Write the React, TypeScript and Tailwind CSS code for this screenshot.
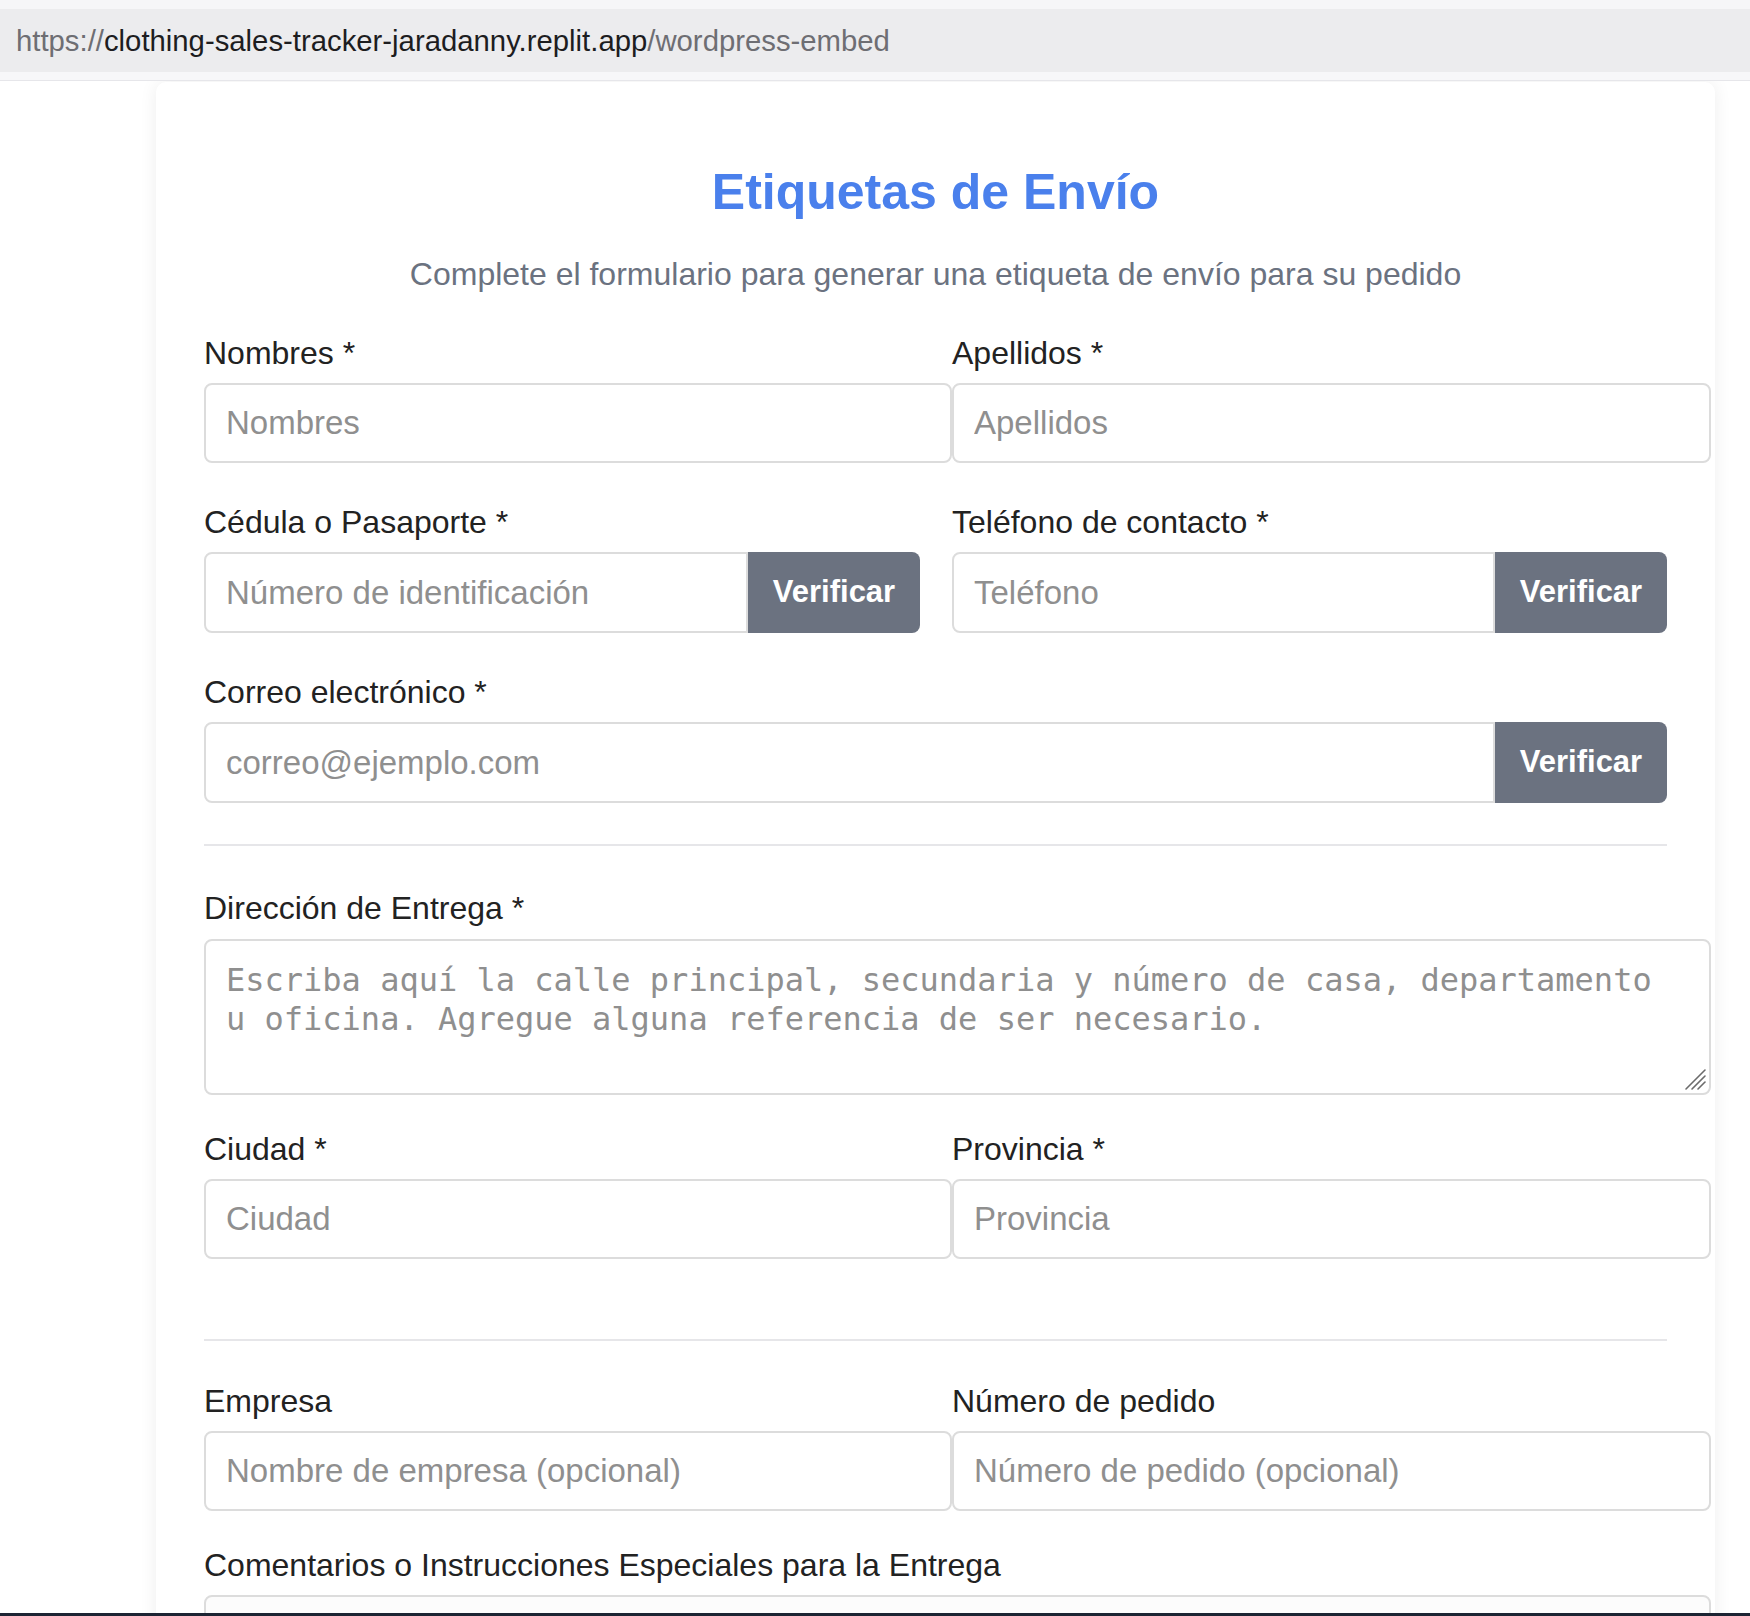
import type { ReactNode } from 'react';

const labelCls = 'block text-[32px] leading-[40px] text-[#222222]';
const inputCls =
  'border-2 border-[#dcdcdc] bg-white px-[20px] text-[33px] text-[#222222] outline-none placeholder:text-[#8f8f8f]';

function Label({ children, className = 'mb-[10px]' }: { children: ReactNode; className?: string }) {
  return <label className={`${labelCls} ${className}`}>{children}</label>;
}

function VerifyField({ placeholder, width }: { placeholder: string; width: string }) {
  return (
    <div className={`flex h-[81px] ${width}`}>
      <input className={`${inputCls} min-w-0 flex-1 rounded-l-[8px]`} placeholder={placeholder} />
      <button className="w-[172px] shrink-0 rounded-r-[8px] bg-[#6b7280] text-[31px] font-bold text-white">
        Verificar
      </button>
    </div>
  );
}

function ResizeGrip() {
  return (
    <svg className="pointer-events-none absolute bottom-[4px] right-[4px]" width="24" height="24" viewBox="0 0 24 24">
      <g stroke="#6b6b6b" strokeWidth="1.6" strokeLinecap="round">
        <line x1="3" y1="22" x2="22" y2="3" />
        <line x1="9" y1="22" x2="22" y2="9" />
        <line x1="15" y1="22" x2="22" y2="15" />
      </g>
    </svg>
  );
}

export default function App() {
  return (
    <div className="flex h-[1616px] flex-col overflow-hidden bg-white font-['Liberation_Sans',Arial,sans-serif]">
      <div className="h-[9px] bg-[#f6f6f8]" />
      <div className="flex h-[63px] items-center bg-[#ececee] pl-[16px] text-[29.3px] text-[#6e6e73]">
        https://<span className="text-[#1d1d1f]">clothing-sales-tracker-jaradanny.replit.app</span>/wordpress-embed
      </div>
      <div className="h-[9px] border-b border-[#e6e6ea] bg-[#f7f7f9]" />

      <main className="flex-1 overflow-hidden pl-[156px] pt-[1px]">
        <div className="w-[1559px] rounded-t-[10px] bg-white px-[48px] pt-[80px] shadow-[0_0_18px_rgba(0,0,0,0.07)]">
          <h1 className="text-center text-[50px] font-bold leading-[60px] text-[#4a80ec]">Etiquetas de Envío</h1>
          <p className="mt-[32px] text-center text-[32px] leading-[40px] text-[#6b7280]">
            Complete el formulario para generar una etiqueta de envío para su pedido
          </p>

          <div className="mt-[39px] grid grid-cols-[716px_715px] gap-x-[32px]">
            <div>
              <Label>Nombres *</Label>
              <input className={`${inputCls} h-[80px] w-[748px] rounded-[8px]`} placeholder="Nombres" />
            </div>
            <div>
              <Label>Apellidos *</Label>
              <input className={`${inputCls} h-[80px] w-[759px] rounded-[8px]`} placeholder="Apellidos" />
            </div>
          </div>

          <div className="mt-[39px] grid grid-cols-[716px_715px] gap-x-[32px]">
            <div>
              <Label>Cédula o Pasaporte *</Label>
              <VerifyField placeholder="Número de identificación" width="w-[716px]" />
            </div>
            <div>
              <Label>Teléfono de contacto *</Label>
              <VerifyField placeholder="Teléfono" width="w-[715px]" />
            </div>
          </div>

          <div className="mt-[39px]">
            <Label>Correo electrónico *</Label>
            <VerifyField placeholder="correo@ejemplo.com" width="w-full" />
          </div>

          <hr className="mt-[41px] h-[2px] border-0 bg-[#e6e6e9]" />

          <div className="mt-[42px]">
            <Label className="mb-[11px]">Dirección de Entrega *</Label>
            <div className="relative w-[1507px]">
              <textarea
                className="block h-[156px] w-full resize-none rounded-[8px] border-2 border-[#dcdcdc] bg-white pl-[20px] pr-[30px] pt-[20px] font-['DejaVu_Sans_Mono',Menlo,monospace] text-[32px] leading-[39px] outline-none placeholder:text-[#8f8f8f]"
                placeholder="Escriba aquí la calle principal, secundaria y número de casa, departamento u oficina. Agregue alguna referencia de ser necesario."
              />
              <ResizeGrip />
            </div>
          </div>

          <div className="mt-[34px] grid grid-cols-[716px_715px] gap-x-[32px]">
            <div>
              <Label>Ciudad *</Label>
              <input className={`${inputCls} h-[80px] w-[748px] rounded-[8px]`} placeholder="Ciudad" />
            </div>
            <div>
              <Label>Provincia *</Label>
              <input className={`${inputCls} h-[80px] w-[759px] rounded-[8px]`} placeholder="Provincia" />
            </div>
          </div>

          <hr className="mt-[80px] h-[2px] border-0 bg-[#e6e6e9]" />

          <div className="mt-[40px] grid grid-cols-[716px_715px] gap-x-[32px]">
            <div>
              <Label>Empresa</Label>
              <input
                className={`${inputCls} h-[80px] w-[748px] rounded-[8px]`}
                placeholder="Nombre de empresa (opcional)"
              />
            </div>
            <div>
              <Label>Número de pedido</Label>
              <input
                className={`${inputCls} h-[80px] w-[759px] rounded-[8px]`}
                placeholder="Número de pedido (opcional)"
              />
            </div>
          </div>

          <div className="mt-[34px]">
            <Label>Comentarios o Instrucciones Especiales para la Entrega</Label>
            <textarea className="block h-[160px] w-[1507px] resize-none rounded-[8px] border-2 border-[#dcdcdc] bg-[#fcfcfc] outline-none" />
          </div>
        </div>
      </main>

      <div className="h-[3px] bg-[#1c2433]" />
    </div>
  );
}
